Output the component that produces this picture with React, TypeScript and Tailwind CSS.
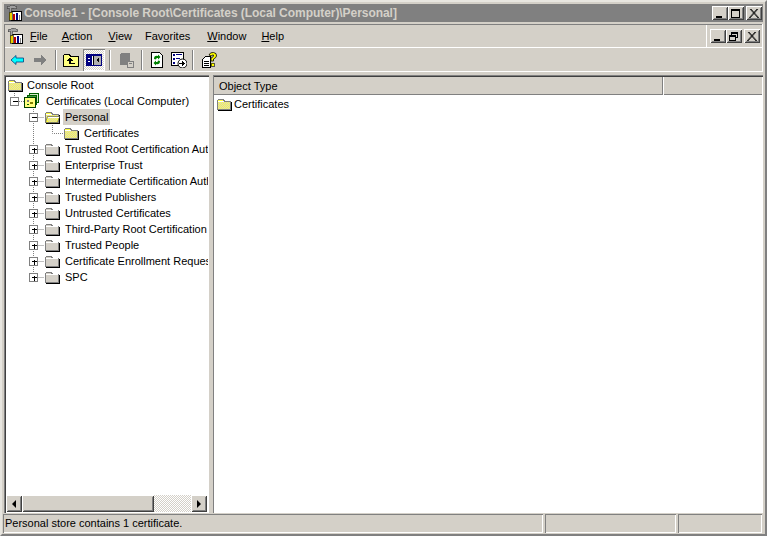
import React from "react";

const raised = "shadow-[inset_1px_1px_0_#ffffff,inset_-1px_-1px_0_#404040,inset_2px_2px_0_#d4d0c8,inset_-2px_-2px_0_#808080]";

function ditherPath(x0: number, y0: number, x1: number, y1: number) {
  let d = "";
  for (let y = y0; y < y1; y++) {
    for (let x = x0; x < x1; x++) {
      if ((x + y) % 2 === 0) d += `M${x} ${y}h1v1h-1z`;
    }
  }
  return d;
}
const bodyDither = ditherPath(2, 5, 14, 12);
const openDither = ditherPath(4, 8, 13, 12);

function Folder({ open = false, className = "" }: { open?: boolean; className?: string }) {
  return (
    <svg width="16" height="16" viewBox="0 0 16 16" shapeRendering="crispEdges" className={`shrink-0 ${className}`}>
      <g transform="translate(0 1)">
        <path d="M1.5 3.5 L2.5 2.5 H7.5 L8.5 4.5 H14.5 V12.5 H1.5 Z" fill="#ffff40" stroke="#808080" />
        <path d={bodyDither} fill="#d4d0c8" />
        <path d="M2 4 H8" stroke="#ffffff" />
        <path d="M15.5 5 V13.5 H2" stroke="#000000" fill="none" />
        {open && (
          <>
            <path d="M3.5 6.5 H15.5 L13.5 12.5 H1.5 Z" fill="#ffff40" stroke="#606060" shapeRendering="auto" strokeWidth="0.7" />
            <path d={openDither} fill="#d4d0c8" />
            <path d="M4 7 H15" stroke="#ffffff" />
          </>
        )}
      </g>
    </svg>
  );
}

function GrayFolder() {
  return (
    <svg width="16" height="16" viewBox="0 0 16 16" shapeRendering="crispEdges" className="shrink-0">
      <g transform="translate(0 1)">
        <path d="M1.5 3.5 L2.5 2.5 H7.5 L8.5 4.5 H14.5 V12.5 H1.5 Z" fill="#d4d0c8" stroke="#808080" />
        <path d="M2 4 H14" stroke="#ffffff" />
        <path d="M15.5 5 V13.5 H2" stroke="#000000" fill="none" />
      </g>
    </svg>
  );
}

function CertIcon() {
  return (
    <svg width="16" height="16" viewBox="0 0 16 16" shapeRendering="crispEdges" className="shrink-0">
      <rect x="5.5" y="0.5" width="9" height="9" fill="#d4e8c8" stroke="#006000" />
      <rect x="3.5" y="2.5" width="9" height="9" fill="#40a040" stroke="#006000" />
      <rect x="0.5" y="4.5" width="11" height="10" fill="#ffff80" stroke="#004000" />
      <rect x="3" y="7" width="2" height="2" fill="#808080" />
      <rect x="6" y="9" width="3" height="2" fill="#808000" />
      <rect x="3" y="11" width="2" height="1" fill="#006000" />
    </svg>
  );
}

function Expander({ minus }: { minus: boolean }) {
  return (
    <g shapeRendering="crispEdges">
      <rect x="-4" y="-4" width="8" height="8" fill="#fff" stroke="#808080" />
      <path d="M-2 0 H3" stroke="#000" />
      {!minus && <path d="M0.5 -2 V3" stroke="#000" />}
    </g>
  );
}

type RowProps = { prefix: React.ReactNode; w: number; icon: React.ReactNode; label: string; selected?: boolean; gap?: string };

function Row({ prefix, w, icon, label, selected, gap = "ml-[3px]" }: RowProps) {
  return (
    <div className="flex items-center h-4 whitespace-nowrap">
      <svg width={w} height="16" viewBox={`0 0 ${w} 16`} className="shrink-0">
        {prefix}
      </svg>
      {icon}
      <span className={`${gap} px-[2px] h-4 leading-[17px] ${selected ? "bg-[#d4d0c8]" : ""}`}>{label}</span>
    </div>
  );
}

const dotted = { stroke: "#808080", strokeDasharray: "1 1", fill: "none" as const };

function Level2({ label, last, minus }: { label: string; last?: boolean; minus?: boolean }) {
  return (
    <Row
      w={37}
      icon={minus ? <Folder open /> : <GrayFolder />}
      label={label}
      selected={minus}
      gap="ml-[3px]"
      prefix={
        <g>
          <path d={last ? "M26.5 0 V8" : "M26.5 0 V16"} {...dotted} />
          <path d="M26.5 8.5 H37" {...dotted} />
          <g transform="translate(26.5 8.5)">
            <Expander minus={!!minus} />
          </g>
        </g>
      }
    />
  );
}

const TIcon = ({ children }: { children: React.ReactNode }) => (
  <svg width="16" height="16" viewBox="0 0 16 16" shapeRendering="crispEdges" className="shrink-0">
    {children}
  </svg>
);

const Sep = ({ ml, mr }: { ml: string; mr: string }) => (
  <div className={`w-[2px] h-[20px] shrink-0 border-l border-[#808080] bg-white ${ml} ${mr}`} />
);

function WinBtn({ children, className = "" }: { children: React.ReactNode; className?: string }) {
  return (
    <div className={`w-4 h-[14px] bg-[#d4d0c8] flex items-center justify-center ${raised} ${className}`}>
      <svg width="10" height="9" viewBox="0 0 10 9" shapeRendering="crispEdges">
        {children}
      </svg>
    </div>
  );
}

const MinG = <rect x="1" y="7" width="6" height="2" fill="#000" />;
const MaxG = (
  <>
    <rect x="0.5" y="0.5" width="8" height="8" fill="none" stroke="#000" />
    <rect x="0" y="0" width="9" height="2" fill="#000" />
  </>
);
const CloseG = <path d="M1 0 L9 9 M2 0 L10 9 M9 0 L1 9 M8 0 L0 9" stroke="#000" strokeWidth="0.8" shapeRendering="auto" />;
const RestoreG = (
  <>
    <rect x="2.5" y="0.5" width="6" height="5" fill="none" stroke="#000" />
    <rect x="2" y="0" width="7" height="2" fill="#000" />
    <rect x="0.5" y="3.5" width="6" height="5" fill="#d4d0c8" stroke="#000" />
    <rect x="0" y="3" width="7" height="2" fill="#000" />
  </>
);

function AppIcon() {
  return (
    <svg width="16" height="16" viewBox="0 0 16 16" shapeRendering="crispEdges" className="shrink-0">
      <rect x="5.5" y="6.5" width="10" height="9" fill="#fff" stroke="#000" />
      <rect x="7" y="9" width="2" height="6" fill="#c00000" />
      <rect x="10" y="8" width="2" height="7" fill="#000080" />
      <rect x="13" y="10" width="1" height="5" fill="#808080" />
      <rect x="3" y="7" width="3" height="8" fill="#e8d000" stroke="#000" strokeWidth="0.6" />
      <path d="M1 2 L6 0 L11 2 L10 4 L6 3 L5 7 L3 7 L3 3 L1 4 Z" fill="#a0a0a0" stroke="#404040" strokeWidth="0.6" />
    </svg>
  );
}

function Menu({ l, rest, ml, u = 0 }: { l: string; rest: string; ml: string; u?: number }) {
  return (
    <span className={ml}>
      {u === 0 ? (
        <>
          <span className="underline">{l}</span>
          {rest}
        </>
      ) : (
        <>
          {l}
          <span className="underline">{rest[0]}</span>
          {rest.slice(1)}
        </>
      )}
    </span>
  );
}

export default function App() {
  return (
    <div className="w-[767px] h-[536px] overflow-hidden bg-[#d4d0c8] flex flex-col text-[11px] text-black font-['Liberation_Sans',sans-serif] border-2 border-t-[#e8e6e0] border-l-[#e8e6e0] border-r-[#808080] border-b-[#808080]">
      {/* title bar */}
      <div className="h-[18px] mx-[2px] mt-[2px] bg-[#808080] flex items-center pl-[2px] pr-[1px] shrink-0">
        <AppIcon />
        <span className="ml-[2px] font-bold text-[#d4d0c8] text-[12px] leading-4 tracking-[-0.05px]">Console1 - [Console Root\Certificates (Local Computer)\Personal]</span>
        <div className="ml-auto flex items-center">
          <WinBtn>{MinG}</WinBtn>
          <WinBtn>{MaxG}</WinBtn>
          <WinBtn className="ml-[2px]">{CloseG}</WinBtn>
        </div>
      </div>

      {/* menu bar */}
      <div className="h-[24px] mt-[2px] mx-[2px] flex shrink-0 items-stretch">
        <div className="flex-1 flex items-center pl-[3px] shadow-[inset_1px_1px_0_#808080,inset_-1px_-1px_0_#ffffff]">
          <AppIcon />
          <div className="flex items-center pt-[1px]">
            <Menu l="F" rest="ile" ml="ml-[7px]" />
            <Menu l="A" rest="ction" ml="ml-[14px]" />
            <Menu l="V" rest="iew" ml="ml-[16px]" />
            <Menu l="Fav" rest="orites" ml="ml-[13px]" u={1} />
            <Menu l="W" rest="indow" ml="ml-[17px]" />
            <Menu l="H" rest="elp" ml="ml-[15px]" />
          </div>
        </div>
        <div className="w-[56px] flex items-center justify-end pr-[3px] shadow-[inset_-1px_-1px_0_#ffffff,inset_0_1px_0_#808080]">
          <WinBtn>{MinG}</WinBtn>
          <WinBtn>{RestoreG}</WinBtn>
          <WinBtn className="ml-[2px]">{CloseG}</WinBtn>
        </div>
      </div>

      {/* toolbar */}
      <div className="h-[24px] mx-[2px] flex items-center pl-[6px] shrink-0 shadow-[inset_1px_0_0_#808080,inset_-1px_-1px_0_#ffffff,inset_0_-1px_0_#ffffff]">
        <TIcon>
          <path d="M1 8 L6 3.5 V6 H13.5 V10 H6 V12.5 Z" fill="#00ffff" stroke="#004080" strokeWidth="0.8" shapeRendering="auto" />
        </TIcon>
        <div className="ml-[6px]">
          <TIcon>
            <path d="M14 8 L9 3 V6 H2 V10 H9 V13 Z" fill="#808080" />
          </TIcon>
        </div>
        <Sep ml="ml-[7px]" mr="mr-[6px]" />
        <TIcon>
          <path d="M0.5 3.5 L1.5 2.5 H6.5 L7.5 4.5 H15.5 V14.5 H0.5 Z" fill="#ffff80" stroke="#000" />
          <path d="M7 6 L3.5 9 H6 V12 H12 V11 H8 V9 H10.5 Z" fill="#000" />
        </TIcon>
        <div className="ml-[4px] w-[22px] h-[22px] flex items-center justify-center bg-[repeating-conic-gradient(#ffffff_0_25%,#d4d0c8_0_50%)] bg-[length:2px_2px] shadow-[inset_1px_1px_0_#808080,inset_-1px_-1px_0_#ffffff]">
          <TIcon>
            <rect x="0.5" y="2.5" width="15" height="11" fill="#fff" stroke="#000080" />
            <rect x="0" y="2" width="16" height="2" fill="#000080" />
            <rect x="1" y="4" width="5" height="9" fill="#000080" />
            <rect x="2" y="6" width="2" height="1" fill="#fff" />
            <rect x="2" y="9" width="2" height="1" fill="#fff" />
            <rect x="8" y="4" width="7" height="9" fill="#b0b0b0" />
            <rect x="7" y="4" width="1" height="9" fill="#000" />
            <path d="M13 5 L10 8 L13 11 Z" fill="#000" />
          </TIcon>
        </div>
        <Sep ml="ml-[4px]" mr="mr-[7px]" />
        <TIcon>
          <rect x="2" y="2" width="10" height="11" fill="#808080" />
          <rect x="3" y="1" width="9" height="3" rx="1" fill="#808080" />
          <rect x="9" y="9" width="6" height="6" fill="#d4d0c8" stroke="#808080" />
          <rect x="11" y="11" width="3" height="1" fill="#808080" />
        </TIcon>
        <Sep ml="ml-[7px]" mr="mr-[6px]" />
        <TIcon>
          <path d="M2.5 0.5 H10.5 L13.5 3.5 V15.5 H2.5 Z" fill="#fff" stroke="#000" />
          <path d="M5 7 Q5 3 9 4 V2.5 L11.5 5 L9 7.5 V6 Q7 5.5 7 7.5 Z" fill="#008000" shapeRendering="auto" />
          <path d="M11 9 Q11 13 7 12 V13.5 L4.5 11 L7 8.5 V10 Q9 10.5 9 8.5 Z" fill="#008000" shapeRendering="auto" />
        </TIcon>
        <div className="ml-[6px]">
          <TIcon>
            <rect x="0.5" y="0.5" width="12" height="13" fill="#fff" stroke="#000" />
            <rect x="2" y="2" width="2" height="2" fill="#000080" />
            <rect x="5" y="2" width="6" height="1" fill="#000080" />
            <rect x="2" y="6" width="2" height="2" fill="#000080" />
            <rect x="5" y="6" width="4" height="1" fill="#000080" />
            <rect x="2" y="10" width="2" height="2" fill="#000080" />
            <circle cx="11.5" cy="11.5" r="4.5" fill="#fff" stroke="#000" shapeRendering="auto" />
            <path d="M8 11 H11 V9 L14 11.5 L11 14 V12 H8 Z" fill="#000" />
          </TIcon>
        </div>
        <Sep ml="ml-[5px]" mr="mr-[8px]" />
        <TIcon>
          <path d="M0.5 7.5 L3.5 4.5 H8.5 V15.5 H0.5 Z" fill="#fff" stroke="#000" />
          <path d="M2 9 H7 M2 11 H7 M2 13 H7" stroke="#000" />
          <path d="M7 3 Q8 0 11.5 0.5 Q15 1 14.5 4 Q14 6 11.5 7 V9 H9 V6 Q12 5 11.5 3 Q10 2.5 9.5 4 Z" fill="#ffff00" stroke="#000" strokeWidth="0.8" shapeRendering="auto" />
          <rect x="9" y="11" width="3" height="3" fill="#ffff00" stroke="#000" strokeWidth="0.6" />
        </TIcon>
      </div>

      {/* panes */}
      <div className="flex-1 min-h-0 flex mx-[1px] mt-[3px] gap-[4px] pl-[1px]">
        <div className="w-[205px] shrink-0 bg-white flex flex-col shadow-[inset_1px_1px_0_#808080,inset_2px_2px_0_#404040,inset_-1px_-1px_0_#ffffff] overflow-hidden pt-[2px]">
          <div className="flex-1 min-h-0 overflow-hidden pl-[2px] ml-[1px] mr-[1px] text-[11px]">
            <Row w={0} icon={<Folder />} label="Console Root" gap="ml-[2px]" prefix={null} />
            <Row
              w={17}
              icon={<CertIcon />}
              label="Certificates (Local Computer)"
              gap="ml-[4px]"
              prefix={
                <g>
                  <path d="M7.5 0 V4" {...dotted} />
                  <path d="M12 8.5 H17" {...dotted} />
                  <g transform="translate(7.5 8.5)">
                    <Expander minus />
                  </g>
                </g>
              }
            />
            <Level2 label="Personal" minus />
            <Row
              w={56}
              icon={<Folder />}
              label="Certificates"
              gap="ml-[3px]"
              prefix={
                <g>
                  <path d="M26.5 0 V16" {...dotted} />
                  <path d="M45.5 0 V8.5 H56" {...dotted} />
                </g>
              }
            />
            <Level2 label="Trusted Root Certification Authorities" />
            <Level2 label="Enterprise Trust" />
            <Level2 label="Intermediate Certification Authorities" />
            <Level2 label="Trusted Publishers" />
            <Level2 label="Untrusted Certificates" />
            <Level2 label="Third-Party Root Certification Authorities" />
            <Level2 label="Trusted People" />
            <Level2 label="Certificate Enrollment Requests" />
            <Level2 label="SPC" last />
          </div>
          {/* h scrollbar */}
          <div className="h-[17px] mx-[2px] mb-[1px] flex shrink-0 bg-[repeating-conic-gradient(#ffffff_0_25%,#d4d0c8_0_50%)] bg-[length:2px_2px]">
            <div className={`w-4 bg-[#d4d0c8] flex items-center justify-center ${raised}`}>
              <div className="w-0 h-0 border-y-[4px] border-y-transparent border-r-[4px] border-r-black" />
            </div>
            <div className={`w-[132px] bg-[#d4d0c8] ${raised}`} />
            <div className={`w-4 ml-auto bg-[#d4d0c8] flex items-center justify-center ${raised}`}>
              <div className="w-0 h-0 border-y-[4px] border-y-transparent border-l-[4px] border-l-black" />
            </div>
          </div>
        </div>

        <div className="flex-1 min-w-0 bg-white shadow-[inset_1px_1px_0_#808080,inset_0_2px_0_#404040,inset_-1px_-1px_0_#ffffff] flex flex-col mr-[1px]">
          <div className="flex h-[18px] mt-[2px] ml-[1px] mr-[1px] shrink-0">
            <div className="w-[449px] pl-[5px] pt-[1px] bg-[#d4d0c8] leading-[16px] shadow-[inset_-1px_-1px_0_#808080,inset_1px_1px_0_#d4d0c8]">Object Type</div>
            <div className="flex-1 bg-[#d4d0c8] shadow-[inset_1px_0_0_#ffffff,inset_0_-1px_0_#808080]" />
          </div>
          <div className="flex items-center h-4 mt-[1px] ml-[3px]">
            <Folder />
            <span className="ml-[2px] leading-[17px]">Certificates</span>
          </div>
        </div>
      </div>

      {/* status bar */}
      <div className="h-[20px] mt-[1px] ml-[1px] mr-[1px] flex shrink-0 gap-[2px] pb-[1px]">
        <div className="w-[540px] pl-[2px] leading-[18px] whitespace-nowrap shadow-[inset_1px_1px_0_#808080,inset_-1px_-1px_0_#ffffff]">Personal store contains 1 certificate.</div>
        <div className="w-[131px] shadow-[inset_1px_1px_0_#808080,inset_-1px_-1px_0_#ffffff]" />
        <div className="flex-1 shadow-[inset_1px_1px_0_#808080,inset_-1px_-1px_0_#ffffff] mr-[2px]" />
      </div>
    </div>
  );
}
